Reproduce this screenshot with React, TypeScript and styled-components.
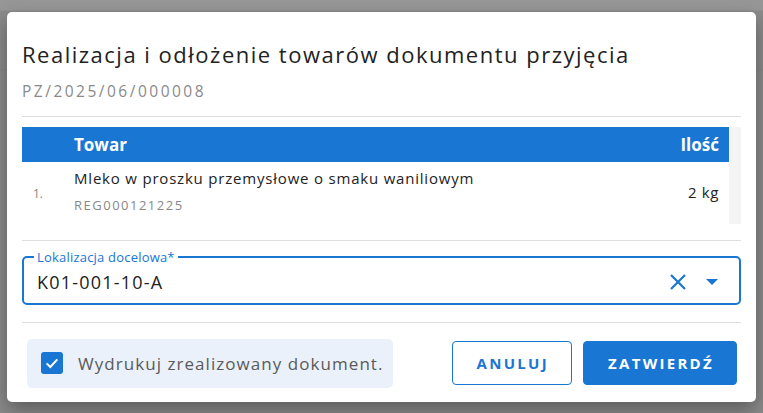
import React from "react";
import styled, { createGlobalStyle } from "styled-components";

const Global = createGlobalStyle`
  html, body { margin: 0; padding: 0; }
  body {
    background: #8d8d8d;
    font-family: "Open Sans", "Liberation Sans", sans-serif;
    width: 763px; height: 413px; overflow: hidden;
  }
`;

const Backdrop = styled.div`
  width: 763px;
  height: 413px;
  box-sizing: border-box;
  padding: 12px 7px 11px 7px;
  display: flex;
  background: linear-gradient(#979797 0px, #979797 10px, #8b8b8b 11px, #8b8b8b 69px, #858585 70px, #8b8b8b 71px);
`;

const Dialog = styled.div`
  flex: 1;
  background: #fff;
  border-radius: 5px;
  box-shadow: 0 8px 20px rgba(0,0,0,0.35);
  padding: 27px 15px 0 15px;
  display: flex;
  flex-direction: column;
  box-sizing: border-box;
`;

const Title = styled.h2`
  margin: 0;
  font-size: 22px;
  font-weight: 400;
  color: #222;
  line-height: 30px;
  letter-spacing: 1.5px;
`;

const Subtitle = styled.div`
  margin-top: 12px;
  font-size: 15.5px;
  color: #8a8a8a;
  letter-spacing: 2.5px;
  line-height: 20px;
`;

const Divider = styled.hr<{ $top: number; $bottom: number }>`
  border: 0;
  border-top: 1px solid #dedede;
  margin: ${(p) => p.$top}px 0 ${(p) => p.$bottom}px 0;
`;

const TableWrap = styled.div`
  display: flex;
  height: 97px;
`;

const Table = styled.div`
  flex: 1;
  display: flex;
  flex-direction: column;
`;

const Scrollbar = styled.div`
  width: 12px;
  background: #f4f4f4;
`;

const HeaderRow = styled.div`
  display: grid;
  grid-template-columns: 52px 1fr auto;
  align-items: center;
  height: 35px;
  background: #1976d2;
  color: #fff;
  font-weight: 700;
  font-size: 17px;
  padding-right: 10px;
`;

const HeadCell = styled.div<{ $right?: boolean }>`
  text-align: ${(p) => (p.$right ? "right" : "left")};
`;

const Row = styled.div`
  display: grid;
  grid-template-columns: 52px 1fr auto;
  align-items: center;
  padding: 6px 10px 6px 0;
`;

const Index = styled.div`
  padding-left: 11px;
  font-size: 12px;
  color: #888;
  padding-top: 5px;
`;

const ItemName = styled.div`
  font-size: 15px;
  color: #222;
  line-height: 20px;
  letter-spacing: 0.8px;
`;

const ItemCode = styled.div`
  font-size: 13px;
  color: #888;
  letter-spacing: 1.5px;
  margin-top: 9px;
  line-height: 16px;
`;

const Qty = styled.div`
  font-size: 15px;
  color: #222;
  letter-spacing: 0.6px;
  padding-top: 2px;
`;

const Field = styled.div`
  position: relative;
  border: 2px solid #1976d2;
  border-radius: 5px;
  padding: 0 12px 0 13px;
  height: 49px;
  box-sizing: border-box;
  display: flex;
  align-items: center;
`;

const FloatingLabel = styled.span`
  position: absolute;
  left: 10px;
  top: -9px;
  padding: 0 3px;
  background: #fff;
  font-size: 13px;
  color: #1976d2;
  line-height: 16px;
  letter-spacing: 0.2px;
`;

const Value = styled.div`
  flex: 1;
  font-size: 18px;
  color: #222;
  padding-top: 2px;
  letter-spacing: 1.2px;
`;

const IconBtn = styled.span`
  display: flex;
  align-items: center;
  justify-content: center;
  width: 30px;
  margin-left: 4px;
  padding-top: 2px;
`;

const Footer = styled.div`
  display: flex;
  align-items: center;
  padding: 0 4px 0 5px;
  height: 50px;
`;

const CheckBox = styled.label`
  display: flex;
  align-items: center;
  gap: 15px;
  background: #eaf1fb;
  border-radius: 5px;
  height: 49px;
  padding: 0 9px 0 14px;
  font-size: 17px;
  color: #5a5a5a;
  letter-spacing: 1.05px;
`;

const Box = styled.span`
  width: 22px;
  height: 22px;
  border-radius: 3px;
  background: #1976d2;
  display: flex;
  align-items: center;
  justify-content: center;
`;

const Spacer = styled.div`
  flex: 1;
`;

const Button = styled.button<{ $primary?: boolean }>`
  height: 44px;
  box-sizing: border-box;
  border-radius: 4px;
  font-family: inherit;
  font-size: 15px;
  font-weight: 700;
  letter-spacing: 2.3px;
  padding: 0 22px 0 24px;
  cursor: pointer;
  border: 1px solid #1976d2;
  background: ${(p) => (p.$primary ? "#1976d2" : "#fff")};
  color: ${(p) => (p.$primary ? "#fff" : "#1976d2")};
  & + & { margin-left: 11px; }
`;

export default function App() {
  return (
    <>
      <Global />
      <Backdrop>
        <Dialog>
          <Title>Realizacja i odłożenie towarów dokumentu przyjęcia</Title>
          <Subtitle>PZ/2025/06/000008</Subtitle>
          <Divider $top={15} $bottom={10} />
          <TableWrap>
            <Table>
              <HeaderRow>
                <span />
                <HeadCell>Towar</HeadCell>
                <HeadCell $right>Ilość</HeadCell>
              </HeaderRow>
              <Row>
                <Index>1.</Index>
                <div>
                  <ItemName>Mleko w proszku przemysłowe o smaku waniliowym</ItemName>
                  <ItemCode>REG000121225</ItemCode>
                </div>
                <Qty>2 kg</Qty>
              </Row>
            </Table>
            <Scrollbar />
          </TableWrap>
          <Divider $top={16} $bottom={15} />
          <Field>
            <FloatingLabel>Lokalizacja docelowa*</FloatingLabel>
            <Value>K01-001-10-A</Value>
            <IconBtn>
              <svg width="24" height="24" viewBox="0 0 24 24">
                <path d="M5 5 L19 19 M19 5 L5 19" stroke="#1976d2" strokeWidth="2.2" fill="none" />
              </svg>
            </IconBtn>
            <IconBtn>
              <svg width="14" height="8" viewBox="0 0 14 8">
                <path d="M1 1 L13 1 L7 7 Z" fill="#1976d2" />
              </svg>
            </IconBtn>
          </Field>
          <Divider $top={17} $bottom={15} />
          <Footer>
            <CheckBox>
              <Box>
                <svg width="16" height="16" viewBox="0 0 24 24">
                  <path d="M4 12.5 L9.5 18 L20 6.5" stroke="#fff" strokeWidth="3" fill="none" />
                </svg>
              </Box>
              Wydrukuj zrealizowany dokument.
            </CheckBox>
            <Spacer />
            <Button>ANULUJ</Button>
            <Button $primary>ZATWIERDŹ</Button>
          </Footer>
        </Dialog>
      </Backdrop>
    </>
  );
}
